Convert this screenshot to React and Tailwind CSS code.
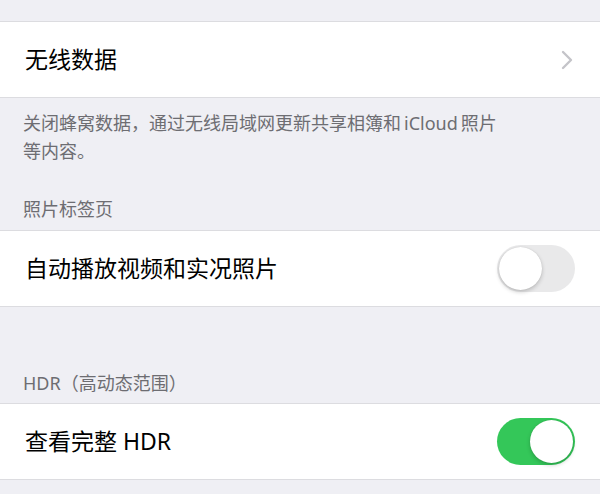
import React, { useState } from 'react';

const FONT = { fontFamily: '"Noto Sans", "Noto Sans CJK SC", sans-serif' };

const Chevron = () => (
  <svg width="12" height="20" viewBox="0 0 12 20" fill="none">
    <path d="M2 2 L10 10 L2 18" stroke="#c4c4c9" strokeWidth="2.4" strokeLinecap="round" strokeLinejoin="round" />
  </svg>
);

const Toggle = ({ on, onChange }) => (
  <button
    onClick={onChange}
    className={`relative w-[78px] h-[47px] rounded-full transition-colors ${
      on ? 'bg-[#34c759]' : 'bg-[#e9e9ea]'
    }`}
  >
    <span
      className={`absolute top-[2px] w-[43px] h-[43px] rounded-full bg-white shadow-[0_2px_4px_rgba(0,0,0,0.2),0_0_1px_rgba(0,0,0,0.15)] transition-all ${
        on ? 'left-[33px]' : 'left-[2px]'
      }`}
    />
  </button>
);

const Row = ({ label, children }) => (
  <div className="h-[77px] bg-white border-y border-[#dcdce0] flex items-center justify-between pl-[25px] pr-[25px]">
    <span className="text-[23px] text-black">{label}</span>
    {children}
  </div>
);

const App = () => {
  const [autoplay, setAutoplay] = useState(false);
  const [hdr, setHdr] = useState(true);

  return (
    <div className="w-[600px] h-[494px] overflow-hidden bg-[#efeff4]" style={FONT}>
      <div className="h-[21px]" />
      <Row label="无线数据">
        <div className="pr-[2px]">
          <Chevron />
        </div>
      </Row>

      <div className="pl-[23px] pr-[20px] pt-[11px] text-[18px] leading-[28px] text-[#6d6d72] whitespace-nowrap">
        关闭蜂窝数据，通过无线局域网更新共享相簿和{'\u2009'}iCloud{'\u2009'}照片
        <br />
        等内容。
      </div>

      <div className="pl-[23px] pt-[32px] pb-[9px] text-[18px] leading-[24px] text-[#6d6d72]">
        照片标签页
      </div>
      <Row label="自动播放视频和实况照片">
        <Toggle on={autoplay} onChange={() => setAutoplay(!autoplay)} />
      </Row>

      <div className="h-[64px]" />
      <div className="pl-[23px] pb-[8px] text-[18px] leading-[24px] text-[#6d6d72]">
        HDR（高动态范围）
      </div>
      <Row label="查看完整 HDR">
        <Toggle on={hdr} onChange={() => setHdr(!hdr)} />
      </Row>
    </div>
  );
};

export default App;
